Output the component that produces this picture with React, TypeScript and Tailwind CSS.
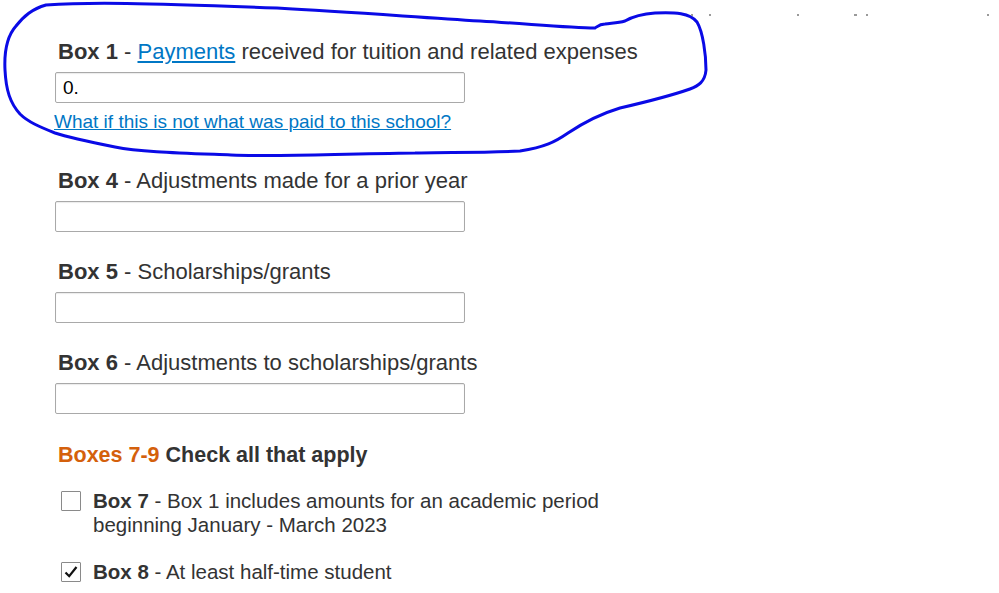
import React from 'react';

const fields = [
  { box: 'Box 4', label: 'Adjustments made for a prior year' },
  { box: 'Box 5', label: 'Scholarships/grants' },
  { box: 'Box 6', label: 'Adjustments to scholarships/grants' },
];

function TextInput({ value = '' }: { value?: string }) {
  return (
    <input
      type="text"
      defaultValue={value}
      className="block w-[410px] h-[31px] border border-[#a9a9a9] rounded-[2px] bg-white px-[7px] text-[19px] text-black shadow-[inset_0_1px_1px_rgba(0,0,0,0.08)] outline-none"
    />
  );
}

function Checkbox({ checked }: { checked?: boolean }) {
  return (
    <span className="mt-[2px] flex h-[20px] w-[20px] shrink-0 items-center justify-center border border-[#8a8a8a] bg-white rounded-[1px]">
      {checked && (
        <svg width="16" height="16" viewBox="0 0 16 16">
          <path d="M2.5 8.5 L6.2 12.2 L13.5 3" fill="none" stroke="#111" strokeWidth="2.2" />
        </svg>
      )}
    </span>
  );
}

export default function App() {
  return (
    <div className="relative min-h-[593px] w-[999px] overflow-hidden bg-white text-[#333] font-['Liberation_Sans',Arial,sans-serif]">
      <div className="pl-[55px] pt-[40px]">
        <div className="text-[22px] leading-[24px] pl-[3px]">
          <b>Box 1</b> - <a href="#" className="text-[#0077c5] underline">Payments</a> received for tuition and related expenses
        </div>
        <div className="mt-[8px]">
          <TextInput value="0." />
        </div>
        <a href="#" className="mt-[9px] ml-[-1px] block text-[19px] leading-[20px] text-[#0077c5] underline">
          What if this is not what was paid to this school?
        </a>

        {fields.map((f, i) => (
          <div key={f.box} className={i === 0 ? 'mt-[37px]' : 'mt-[28px]'}>
            <div className="text-[22px] leading-[24px] pl-[3px]">
              <b>{f.box}</b> - {f.label}
            </div>
            <div className="mt-[8px]">
              <TextInput />
            </div>
          </div>
        ))}

        <div className="mt-[29px] pl-[3px] text-[21.5px] leading-[24px] font-bold">
          <span className="text-[#d4600c]">Boxes 7-9</span> Check all that apply
        </div>

        <div className="mt-[22px] ml-[6px] flex gap-[12px] text-[20.5px] leading-[24px]">
          <Checkbox />
          <div className="w-[540px]">
            <b>Box 7</b> - Box 1 includes amounts for an academic period beginning January - March 2023
          </div>
        </div>

        <div className="mt-[23px] ml-[6px] flex gap-[12px] text-[20.5px] leading-[24px]">
          <Checkbox checked />
          <div>
            <b>Box 8</b> - At least half-time student
          </div>
        </div>
      </div>

      {/* hand-drawn annotation over the page */}
      <svg className="pointer-events-none absolute left-0 top-0" width="999" height="593">
        <path
          d="M46 5 C90 2 140 3 277 8 C350 12 415 17 480 21 C530 24 570 28 595 28 C598 26 600 24 605 24 C612 23 618 23 625 21 C632 17 640 14 655 13 C675 12 690 13 697 22 C703 32 706 55 706 70 C705 82 698 86 690 89 C670 96 646 102 620 108 C600 114 580 125 568 133 C555 142 545 147 520 151 C480 153 440 152 415 153 C330 154 280 157 231 155 C180 153 140 152 115 147 C90 142 70 138 55 133 C40 127 28 122 20 114 C10 103 6 90 5 70 C4 50 8 35 16 26 C24 16 32 9 46 5 Z"
          fill="none"
          stroke="#0a0ae6"
          strokeWidth="3"
          strokeLinejoin="round"
        />
        <g fill="#9a9a9a">
          <rect x="691" y="14" width="2" height="2" />
          <rect x="709" y="14" width="2" height="2" />
          <rect x="797" y="14" width="2" height="2" />
          <rect x="854" y="14" width="3" height="2" />
          <rect x="866" y="14" width="2" height="2" />
          <rect x="987" y="14" width="2" height="2" />
        </g>
      </svg>
    </div>
  );
}
